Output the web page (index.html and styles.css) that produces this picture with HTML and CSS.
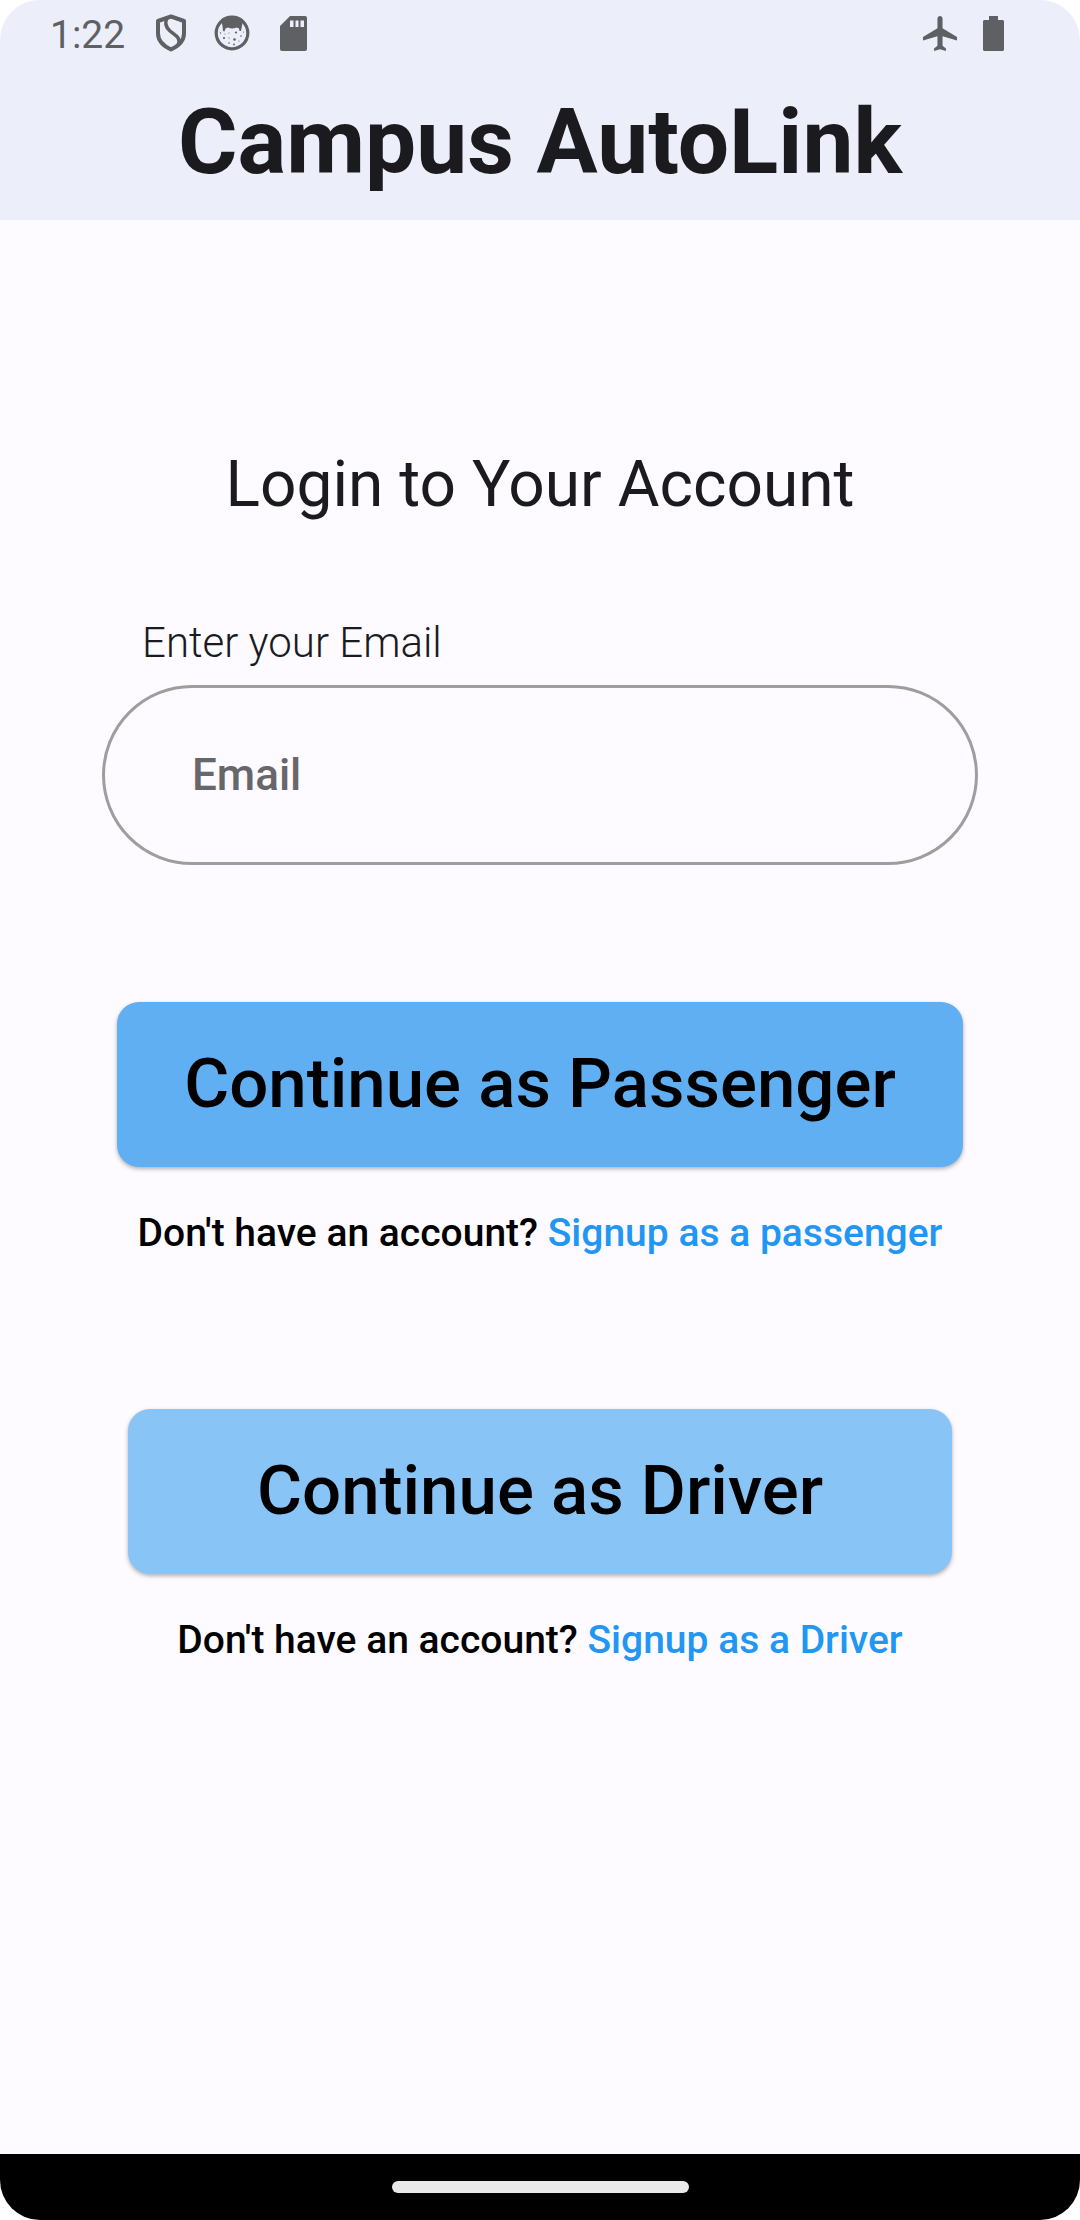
FILE: index.html
```html
<!DOCTYPE html>
<html lang="en">
<head>
  <meta charset="utf-8">
  <meta name="viewport" content="width=device-width, initial-scale=1">
  <title>Campus AutoLink</title>
  <link rel="stylesheet" href="styles.css">
</head>
<body>
  <div class="screen">
    <header class="app-bar">
      <div class="status-bar">
        <span class="clock">1:22</span>
        <svg class="icon shield" viewBox="0 0 32 38" aria-hidden="true">
          <path d="M16 2.500 29 7V19.500C29 27 23.500 32 16 35.500 8.500 32 3 27 3 19.500V7Z" fill="none" stroke="currentColor" stroke-width="4" stroke-linejoin="round"/>
          <path d="M12 4C9.500 9 10.500 13 15 17 20 21 26 23.500 23.500 30" fill="none" stroke="currentColor" stroke-width="3.500"/>
        </svg>
        <svg class="icon face" viewBox="0 0 36 36" aria-hidden="true">
          <circle cx="18" cy="18" r="15.800" fill="none" stroke="currentColor" stroke-width="3.200"/>
          <path d="M7 5Q18-1 29 5L28 11 27 16 25.500 16 25 13.500 22.500 12.500Q18 14.500 14 12.500L11.500 13.500 10.500 16.500 9 16 8.500 11Z" fill="currentColor"/>
          <g fill="currentColor">
            <circle cx="10" cy="23" r="1.100"/><circle cx="22" cy="17.500" r="1.100"/><circle cx="20.500" cy="24.500" r="1.300"/>
            <circle cx="15" cy="18" r=".6"/><circle cx="27" cy="21" r=".8"/><circle cx="15" cy="28" r=".8"/>
            <circle cx="20" cy="29.500" r=".9"/><circle cx="6.500" cy="18" r=".7"/><circle cx="25" cy="26" r=".6"/>
            <circle cx="15" cy="23" r=".6"/><circle cx="29.500" cy="17" r=".6"/><circle cx="11" cy="19" r=".5"/>
          </g>
        </svg>
        <svg class="icon card" viewBox="0 0 27 35" aria-hidden="true">
          <path fill="currentColor" fill-rule="evenodd" d="M10 0H25Q27 0 27 2V33Q27 35 25 35H2Q0 35 0 33V10ZM10 4.500V11H13.500V4.500ZM15.500 4.500V11H18.500V4.500ZM20.500 4.500V11H24V4.500Z"/>
        </svg>
        <span class="spacer"></span>
        <svg class="icon plane" viewBox="2 2 20 20" preserveAspectRatio="none" aria-hidden="true">
          <path fill="currentColor" d="M22 16v-2l-8.500-5V3.500C13.500 2.670 12.830 2 12 2s-1.500.67-1.500 1.500V9L2 14v2l8.500-2.500V19L8.500 20.500V22l3.500-1 3.500 1v-1.500L13.500 19v-5.500L22 16z"/>
        </svg>
        <svg class="icon battery" viewBox="0 0 21 35" aria-hidden="true">
          <path fill="currentColor" d="M6 0H15V4H20L21 5V34L20 35H1L0 34V5L1 4H6Z"/>
        </svg>
      </div>
      <h1 class="app-title">Campus AutoLink</h1>
    </header>

    <main class="content">
      <h2 class="heading">Login to Your Account</h2>
      <form class="login">
        <label class="label" for="email">Enter your Email</label>
        <input class="email" id="email" type="email" placeholder="Email">
        <button class="button passenger" type="button">Continue as Passenger</button>
        <p class="signup">Don't have an account? <a href="#passenger">Signup as a passenger</a></p>
        <button class="button driver" type="button">Continue as Driver</button>
        <p class="signup">Don't have an account? <a href="#driver">Signup as a Driver</a></p>
      </form>
    </main>

    <footer class="nav-bar"><div class="handle"></div></footer>
  </div>
</body>
</html>
```

FILE: styles.css
```css
* {
  box-sizing: border-box;
}

body {
  margin: 0;
  background: #fff;
  color: #1b1b1f;
  font-family: Roboto, "Noto Sans", sans-serif;
}

.screen {
  display: flex;
  flex-direction: column;
  min-height: 100vh;
  overflow: hidden;
  border-radius: 40px;
  background: #fdfbff;
}

.app-bar {
  padding-bottom: 24px;
  background: #eceffa;
}

.status-bar {
  display: flex;
  align-items: center;
  height: 66px;
  padding: 0 76px 0 50px;
  color: #5f6063;
}

.clock {
  padding-top: 3px;
  font-size: 39px;
  line-height: 46px;
}

.icon {
  flex: none;
}

.shield {
  width: 32px;
  height: 38px;
  margin-left: 30px;
}

.face {
  width: 36px;
  height: 36px;
  margin-left: 27px;
}

.card {
  width: 27px;
  height: 35px;
  margin-left: 30px;
}

.spacer {
  flex: 1;
}

.plane {
  width: 34px;
  height: 35px;
  margin-right: 26px;
}

.battery {
  width: 21px;
  height: 35px;
}

.app-title {
  margin: 22px 0 0;
  font-size: 91px;
  font-weight: 700;
  line-height: 108px;
  text-align: center;
}

.content {
  flex: 1;
  padding: 228px 102px 60px;
}

.heading {
  margin: 0 0 97px;
  font-size: 64px;
  font-weight: 400;
  line-height: 74px;
  text-align: center;
}

.login {
  display: flex;
  flex-direction: column;
}

.label {
  margin: 0 40px 18px;
  font-size: 42px;
  font-weight: 300;
  line-height: 48px;
}

.email {
  width: 100%;
  height: 180px;
  margin-bottom: 137px;
  padding: 0 87px;
  border: 3px solid #9e9e9e;
  border-radius: 90px;
  background: transparent;
  color: #1b1b1f;
  font: 500 44px Roboto, "Noto Sans", sans-serif;
}

.email::placeholder {
  color: #67666a;
  opacity: 1;
}

.button {
  height: 165px;
  margin: 0 15px 43px;
  padding: 0 0 3px;
  border: 0;
  border-radius: 22px;
  box-shadow: 0 2px 4px rgba(0, 0, 0, 0.3);
  color: #000;
  font: 500 69px Roboto, "Noto Sans", sans-serif;
}

.passenger {
  background: #60aff3;
}

.driver {
  margin: 0 26px 43px;
  background: #89c4f7;
}

.signup {
  margin: 0 0 153px;
  color: #000;
  font-size: 39px;
  font-weight: 500;
  line-height: 46px;
  text-align: center;
}

.signup:last-child {
  margin-bottom: 0;
}

.signup a {
  color: #2196f3;
  text-decoration: none;
}

.nav-bar {
  display: flex;
  align-items: center;
  justify-content: center;
  height: 66px;
  background: #000;
}

.handle {
  width: 297px;
  height: 12px;
  border-radius: 6px;
  background: #e9e9e9;
}
```
